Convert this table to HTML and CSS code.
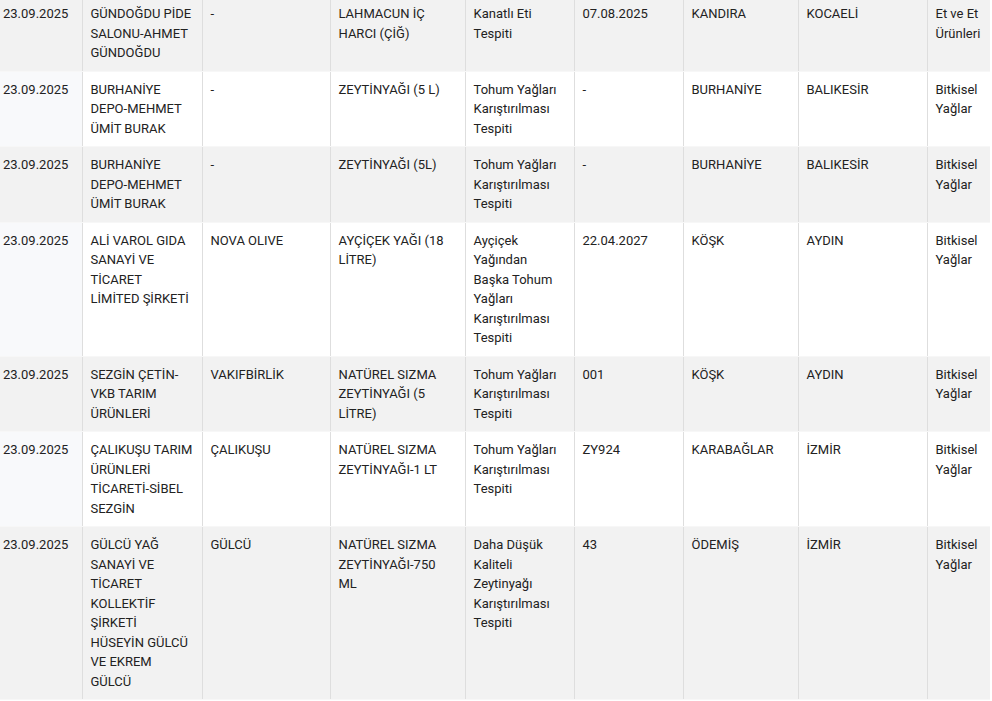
FILE: index.html
```html
<!DOCTYPE html>
<html lang="tr">
<head>
<meta charset="utf-8">
<title>Tablo</title>
<link rel="stylesheet" href="styles.css">
</head>
<body>
<table class="list">
  <colgroup>
    <col class="c-date"><col class="c-firm"><col class="c-brand"><col class="c-product"><col class="c-issue"><col class="c-lot"><col class="c-district"><col class="c-city"><col class="c-cat">
  </colgroup>
  <tbody>
    <tr class="odd">
      <td>23.09.2025</td><td>GÜNDOĞDU PİDE SALONU-AHMET GÜNDOĞDU</td><td>-</td><td>LAHMACUN İÇ HARCI (ÇİĞ)</td><td>Kanatlı Eti Tespiti</td><td>07.08.2025</td><td>KANDIRA</td><td>KOCAELİ</td><td>Et ve Et Ürünleri</td>
    </tr>
    <tr class="even">
      <td>23.09.2025</td><td>BURHANİYE DEPO-MEHMET ÜMİT BURAK</td><td>-</td><td>ZEYTİNYAĞI (5 L)</td><td>Tohum Yağları Karıştırılması Tespiti</td><td>-</td><td>BURHANİYE</td><td>BALIKESİR</td><td>Bitkisel Yağlar</td>
    </tr>
    <tr class="odd">
      <td>23.09.2025</td><td>BURHANİYE DEPO-MEHMET ÜMİT BURAK</td><td>-</td><td>ZEYTİNYAĞI (5L)</td><td>Tohum Yağları Karıştırılması Tespiti</td><td>-</td><td>BURHANİYE</td><td>BALIKESİR</td><td>Bitkisel Yağlar</td>
    </tr>
    <tr class="even">
      <td>23.09.2025</td><td>ALİ VAROL GIDA SANAYİ VE TİCARET LİMİTED ŞİRKETİ</td><td>NOVA OLIVE</td><td>AYÇİÇEK YAĞI (18 LİTRE)</td><td>Ayçiçek Yağından Başka Tohum Yağları Karıştırılması Tespiti</td><td>22.04.2027</td><td>KÖŞK</td><td>AYDIN</td><td>Bitkisel Yağlar</td>
    </tr>
    <tr class="odd">
      <td>23.09.2025</td><td>SEZGİN ÇETİN-VKB TARIM ÜRÜNLERİ</td><td>VAKIFBİRLİK</td><td>NATÜREL SIZMA ZEYTİNYAĞI (5 LİTRE)</td><td>Tohum Yağları Karıştırılması Tespiti</td><td>001</td><td>KÖŞK</td><td>AYDIN</td><td>Bitkisel Yağlar</td>
    </tr>
    <tr class="even">
      <td>23.09.2025</td><td>ÇALIKUŞU TARIM ÜRÜNLERİ TİCARETİ-SİBEL SEZGİN</td><td>ÇALIKUŞU</td><td>NATÜREL SIZMA ZEYTİNYAĞI-1 LT</td><td>Tohum Yağları Karıştırılması Tespiti</td><td>ZY924</td><td>KARABAĞLAR</td><td>İZMİR</td><td>Bitkisel Yağlar</td>
    </tr>
    <tr class="odd">
      <td>23.09.2025</td><td>GÜLCÜ YAĞ SANAYİ VE TİCARET KOLLEKTİF ŞİRKETİ HÜSEYİN&nbsp;GÜLCÜ VE EKREM GÜLCÜ</td><td>GÜLCÜ</td><td>NATÜREL SIZMA ZEYTİNYAĞI-750 ML</td><td>Daha Düşük Kaliteli Zeytinyağı Karıştırılması Tespiti</td><td>43</td><td>ÖDEMİŞ</td><td>İZMİR</td><td>Bitkisel Yağlar</td>
    </tr>
  </tbody>
</table>
</body>
</html>
```

FILE: styles.css
```css
html, body {
  margin: 0;
  padding: 0;
  background: #ffffff;
}

body {
  font-family: Roboto, "Noto Sans", Arial, sans-serif;
  font-size: 13px;
  line-height: 19.5px;
  color: #222222;
  overflow: hidden;
}

.list {
  margin-top: -4px;
  border-collapse: collapse;
  table-layout: fixed;
  width: 990px;
}

.c-date { width: 82px; }
.c-firm { width: 120px; }
.c-brand { width: 128px; }
.c-product { width: 135px; }
.c-issue { width: 109px; }
.c-lot { width: 109px; }
.c-district { width: 115px; }
.c-city { width: 129px; }
.c-cat { width: 63px; }

.list td {
  vertical-align: top;
  padding: 8px 8px 8px 8px;
  border-left: 1px solid #dedede;
  border-bottom: 1px solid #f7f7f7;
  overflow-wrap: break-word;
}

.list td:first-child {
  border-left: none;
  padding-left: 3px;
  padding-right: 4px;
}

.list tr.odd td {
  background: #f2f2f2;
}

.list tr.even td {
  background: #ffffff;
}

.list tr.even td:first-child {
  background: #f8f9fb;
}
```
